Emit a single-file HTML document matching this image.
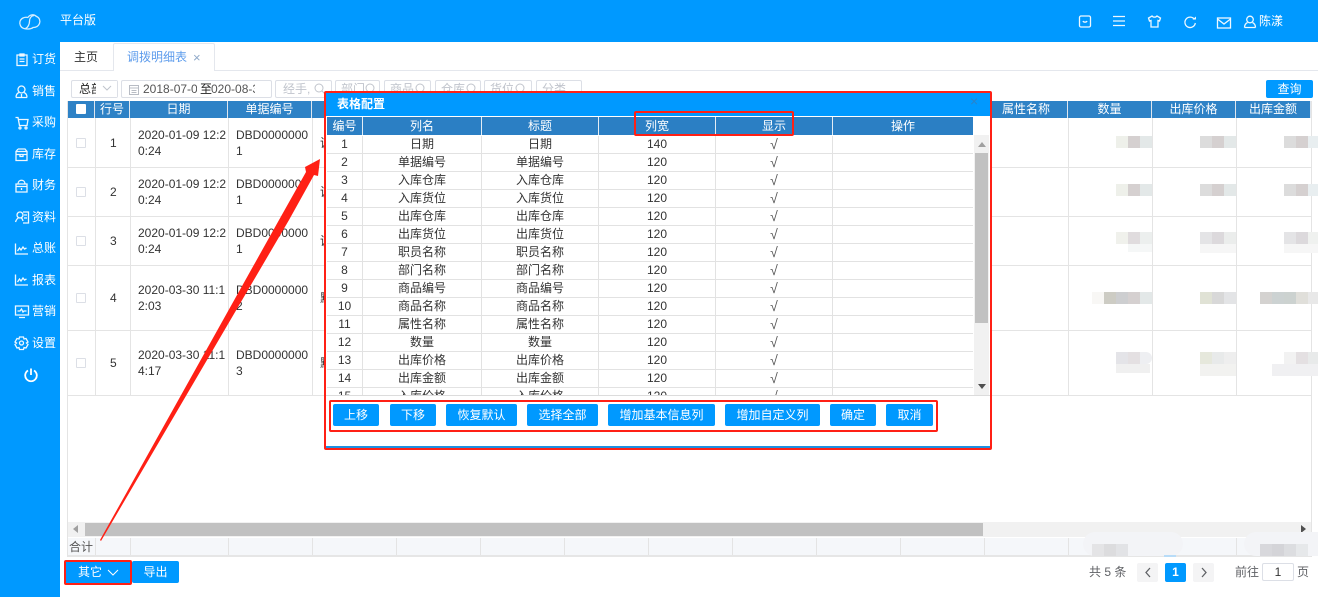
<!DOCTYPE html>
<html lang="zh"><head><meta charset="utf-8"><title>调拨明细表</title>
<style>
*{box-sizing:border-box}
html,body{margin:0;padding:0}
body{width:1318px;height:597px;overflow:hidden;position:relative;background:#fff;color:#333;font:12px/16px "Liberation Sans","Noto Sans CJK SC",sans-serif}
.a{position:absolute}
.side{left:0;top:0;width:60px;height:597px;background:#0099ff}
.top{left:0;top:0;width:1318px;height:42px;background:#0099ff}
.m{position:absolute;left:32px;color:#fff;font-size:12px;line-height:16px;white-space:nowrap}
svg{position:absolute;overflow:visible}
.wi{fill:none;stroke:#eef8ff;stroke-width:1.3}
.inp{position:absolute;height:18px;top:80px;border:1px solid #dcdfe6;background:#fff;border-radius:2px;color:#606266;overflow:hidden;white-space:nowrap}
.th{position:absolute;top:101px;height:17px;background:#2e82c6;color:#fff;text-align:center;line-height:16px;border-right:1px solid #dfe6ee;overflow:hidden}
.v{position:absolute;width:1px;background:#e4e4e4}
.h{position:absolute;left:68px;width:1243px;height:1px;background:#e4e4e4}
.c{position:absolute;color:#333;white-space:nowrap}
.b{position:absolute;width:12px;height:12px}
.f{position:absolute;top:538px;height:17px;width:1px;background:#e4e4e4}
.btn{position:absolute;top:404px;height:22px;background:#0099ff;color:#fff;text-align:center;line-height:22px;border-radius:2px}
table{border-collapse:separate;border-spacing:0;table-layout:fixed;width:647px;font-size:12px}
#mt td{height:18px;padding:0;border-bottom:1px solid #e2e2e2;border-right:1px solid #e2e2e2;text-align:center;line-height:17px;color:#333;white-space:nowrap;overflow:hidden}
#mt td:nth-child(5){font-size:14px;color:#555}
#mh td{height:18px;padding:0;background:#2b7fc4;color:#fff;text-align:center;border-right:1px solid #e3edf5;line-height:17px}
.red{position:absolute;border:2.5px solid #ff2015;border-radius:2px;background:transparent}
.pg{position:absolute;top:563px;width:21px;height:19px;background:#f4f4f5;color:#606266;text-align:center;line-height:19px;border-radius:2px}
</style></head><body>

<div class="a top"></div>
<div class="a side"></div>

<svg style="left:19px;top:13px" width="22" height="18" viewBox="0 0 22 18"><path fill="none" stroke="#d5eeff" stroke-width="1.300" d="M9 4.500C10.500 1.500 15 .8 17.500 3.500 20.500 4.500 21.500 8 20.500 10.500 19.500 13 17 14.500 14 14.500 12.500 16 8 16.500 5 15.500 1.500 14.500 .3 11 1 8.500 1.800 5.500 5.500 3.500 9 4.500M15 2.500C11 3 10.500 7 10.500 8.500 10.500 11 9 14.500 6.500 15.500"/></svg>
<div class="a" style="left:60px;top:12px;color:#fff;font-size:12px">平台版</div>

<!-- sidebar -->
<svg style="left:16px;top:53px" width="12" height="13" viewBox="0 0 12 13"><path class="wi" d="M1 2h10v10.500H1zM4 1h4v2H4zM3.500 6h5M3.500 8.500h5"/></svg>
<div class="m" style="top:51px">订货</div>
<svg style="left:15px;top:85px" width="13" height="13" viewBox="0 0 13 13"><circle class="wi" cx="6.500" cy="4.500" r="3.500"/><path class="wi" d="M1 12.500c0-4 2-4.500 3-5M12 12.500c0-4-2-4.500-3-5M1 12.500h11M6.500 9v3"/></svg>
<div class="m" style="top:83px">销售</div>
<svg style="left:15px;top:116px" width="14" height="14" viewBox="0 0 14 14"><path class="wi" d="M.5 1.500h2.500l1.500 8h7.500l1-6H3.500"/><circle class="wi" cx="5" cy="12" r="1"/><circle class="wi" cx="11" cy="12" r="1"/></svg>
<div class="m" style="top:114px">采购</div>
<svg style="left:15px;top:148px" width="13" height="13" viewBox="0 0 13 13"><path class="wi" d="M1 3.500h11v9H1zM3 1h7l2 2.500M1 3.500 3 1M1 6.500h11M5 6.500v2h3v-2"/></svg>
<div class="m" style="top:146px">库存</div>
<svg style="left:15px;top:179px" width="13" height="14" viewBox="0 0 13 14"><path class="wi" d="M1 5h11v8H1zM3 5c0-5 7-5 7 0M1 7.500h11M6.500 9v2"/></svg>
<div class="m" style="top:177px">财务</div>
<svg style="left:15px;top:211px" width="14" height="13" viewBox="0 0 14 13"><path class="wi" d="M8 1h5.500v11H8M9 4h3M9 7h3"/><circle class="wi" cx="5" cy="4" r="3"/><path class="wi" d="M.5 11c1-3 2.500-4 3-4M8 10c-.5-2-1.500-3-2-3"/></svg>
<div class="m" style="top:209px">资料</div>
<svg style="left:15px;top:243px" width="13" height="12" viewBox="0 0 13 12"><path class="wi" d="M.5 .5v10.500H13M2.500 8l2-3 1.500 2 2-3 1.500 2 2-1"/></svg>
<div class="m" style="top:240px">总账</div>
<svg style="left:15px;top:274px" width="13" height="12" viewBox="0 0 13 12"><path class="wi" d="M.5 .5v10.500H13M2.500 8l2-3 1.500 2 2-3 1.500 2 2-1"/></svg>
<div class="m" style="top:272px">报表</div>
<svg style="left:15px;top:305px" width="14" height="13" viewBox="0 0 14 13"><path class="wi" d="M.5 1h13v9H.5zM4 12.500h6M2.500 6H5l1.500-2 1.500 3 1-1h2.500"/></svg>
<div class="m" style="top:303px">营销</div>
<svg style="left:15px;top:336px" width="13" height="14" viewBox="0 0 13 14"><path class="wi" d="M4.500 1h4l.5 2 2-.5 2 3.500-1.500 1 1.500 1.500-2 3.500-2-.5-.5 2h-4l-.5-2-2 .5-2-3.500L1.500 7 0 6l2-3.500 2 .5z"/><circle class="wi" cx="6.500" cy="7" r="2"/></svg>
<div class="m" style="top:335px">设置</div>
<svg style="left:24px;top:368px" width="14" height="14" viewBox="0 0 14 14"><path fill="none" stroke="#fff" stroke-width="1.800" d="M4 2.500a5.800 5.800 0 1 0 6 0M7 .5v6.500"/></svg>

<!-- top right icons -->
<svg style="left:1079px;top:15px" width="12" height="13" viewBox="0 0 12 13"><rect class="wi" x=".5" y="1" width="11" height="11" rx="1.500"/><path class="wi" d="M4 6c.5 1.500 3.500 1.500 4 0"/></svg>
<svg style="left:1113px;top:15px" width="12" height="12" viewBox="0 0 12 12"><path class="wi" stroke-width="1.500" d="M0 1.500h12M0 6h12M0 10.500h12"/></svg>
<svg style="left:1148px;top:15px" width="13" height="13" viewBox="0 0 13 13"><path class="wi" stroke-width="1.500" d="M4 1c1 1.500 4 1.500 5 0l3.500 2-1 3-1.500-.5v6.500H3V5.500L1.500 6l-1-3z"/></svg>
<svg style="left:1184px;top:16px" width="12" height="12" viewBox="0 0 12 12"><path class="wi" stroke-width="1.500" d="M10.500 3.500A5.200 5.200 0 1 0 11.300 7"/><path d="M8.500 3.500h3.500V.5z" fill="#eef8ff"/></svg>
<svg style="left:1217px;top:17px" width="14" height="12" viewBox="0 0 14 12"><rect class="wi" stroke-width="1.500" x=".5" y="1" width="13" height="10"/><path class="wi" stroke-width="1.500" d="M.5 2 7 7l6.500-5"/></svg>
<svg style="left:1244px;top:15px" width="12" height="13" viewBox="0 0 12 13"><circle class="wi" cx="6" cy="4.500" r="3.300"/><path class="wi" d="M.5 12.500c0-3 2-4.500 3-5M11.500 12.500c0-3-2-4.500-3-5M.5 12.500h11"/></svg>
<div class="a" style="left:1259px;top:13px;color:#fff">陈漾</div>

<!-- tabs -->
<div class="a" style="left:60px;top:70px;width:1258px;height:1px;background:#e4e7ed"></div>
<div class="a" style="left:74px;top:49px;color:#333">主页</div>
<div class="a" style="left:113px;top:43px;width:102px;height:28px;background:#fff;border:1px solid #e4e7ed;border-bottom:0;border-radius:2px 2px 0 0"></div>
<div class="a" style="left:127px;top:49px;color:#5d9cec">调拨明细表</div>
<div class="a" style="left:193px;top:50px;color:#8fa9c9;font-size:13px">×</div>

<!-- toolbar -->
<div class="inp" style="left:71px;width:47px;top:80px;padding-left:7px;color:#222">总部</div>
<div class="a" style="left:96px;top:81px;width:21px;height:16px;background:#fff"></div>
<svg style="left:102px;top:85px" width="10" height="6"><path d="M1 1l4 4 4-4" fill="none" stroke="#c0c4cc"/></svg>
<div class="inp" style="left:121px;width:151px"></div>
<svg style="left:129px;top:84px" width="10" height="11"><path d="M.5 1.500h9v9h-9zM.5 4h9M2.500 6.500h5M2.500 8.500h5" fill="none" stroke="#b8bcc4"/></svg>
<div class="a" style="left:143px;top:81px;width:54px;height:16px;overflow:hidden;color:#555;white-space:nowrap">2018-07-01</div>
<div class="a" style="left:200px;top:81px;color:#222">至</div>
<div class="a" style="left:211px;top:81px;width:44px;overflow:hidden;color:#555;white-space:nowrap">020-08-31</div>
<div class="inp" style="left:275px;width:57px;padding-left:7px;color:#c0c4cc">经手,</div>
<svg style="left:314px;top:83px" width="12" height="12"><circle cx="5" cy="5" r="4" fill="none" stroke="#c0c4cc"/><path d="M8 8l3 3" stroke="#c0c4cc"/></svg>
<div class="inp" style="left:335px;width:45px;padding-left:5px;color:#c0c4cc">部门<svg style="left:29px;top:2px" width="10" height="10"><circle cx="5" cy="5" r="4" fill="none" stroke="#c0c4cc"/></svg></div>
<div class="inp" style="left:384px;width:47px;padding-left:5px;color:#c0c4cc">商品<svg style="left:30px;top:2px" width="10" height="10"><circle cx="5" cy="5" r="4" fill="none" stroke="#c0c4cc"/></svg></div>
<div class="inp" style="left:435px;width:46px;padding-left:5px;color:#c0c4cc">仓库<svg style="left:30px;top:2px" width="10" height="10"><circle cx="5" cy="5" r="4" fill="none" stroke="#c0c4cc"/></svg></div>
<div class="inp" style="left:484px;width:48px;padding-left:5px;color:#c0c4cc">货位<svg style="left:30px;top:2px" width="10" height="10"><circle cx="5" cy="5" r="4" fill="none" stroke="#c0c4cc"/></svg></div>
<div class="inp" style="left:536px;width:46px;padding-left:5px;color:#c0c4cc">分类</div>
<div class="a" style="left:1266px;top:80px;width:47px;height:18px;background:#0099ff;color:#fff;text-align:center;line-height:18px;border-radius:2px">查询</div>

<!-- main table header -->
<div class="th" style="left:68px;width:27px"></div>
<div class="a" style="left:76px;top:104px;width:10px;height:10px;background:#fff;border-radius:1px"></div>
<div class="th" style="left:95px;width:35px">行号</div>
<div class="th" style="left:130px;width:98px">日期</div>
<div class="th" style="left:228px;width:84px">单据编号</div>
<div class="th" style="left:312px;width:100px"></div>
<div class="th" style="left:985px;width:83px">属性名称</div>
<div class="th" style="left:1068px;width:84px">数量</div>
<div class="th" style="left:1152px;width:84px">出库价格</div>
<div class="th" style="left:1236px;width:75px">出库金额</div>

<!-- main lines -->
<div class="h" style="top:167px"></div><div class="h" style="top:216px"></div><div class="h" style="top:265px"></div><div class="h" style="top:330px"></div><div class="h" style="top:395px"></div>
<div class="v" style="left:67px;top:101px;height:456px"></div>
<div class="v" style="left:95px;top:118px;height:278px"></div>
<div class="v" style="left:130px;top:118px;height:278px"></div>
<div class="v" style="left:228px;top:118px;height:278px"></div>
<div class="v" style="left:312px;top:118px;height:278px"></div>
<div class="v" style="left:1068px;top:118px;height:278px"></div>
<div class="v" style="left:1152px;top:118px;height:278px"></div>
<div class="v" style="left:1236px;top:118px;height:278px"></div>
<div class="v" style="left:1311px;top:101px;height:456px"></div>

<!-- checkboxes -->
<div class="a" style="left:76px;top:138px;width:10px;height:10px;border:1px solid #dcdfe6;border-radius:1px"></div>
<div class="a" style="left:76px;top:187px;width:10px;height:10px;border:1px solid #dcdfe6;border-radius:1px"></div>
<div class="a" style="left:76px;top:236px;width:10px;height:10px;border:1px solid #dcdfe6;border-radius:1px"></div>
<div class="a" style="left:76px;top:293px;width:10px;height:10px;border:1px solid #dcdfe6;border-radius:1px"></div>
<div class="a" style="left:76px;top:358px;width:10px;height:10px;border:1px solid #dcdfe6;border-radius:1px"></div>

<!-- row text -->
<div class="c" style="left:110px;top:135px">1</div>
<div class="c" style="left:138px;top:127px">2020-01-09 12:2<br>0:24</div>
<div class="c" style="left:236px;top:127px">DBD0000000<br>1</div>
<div class="c" style="left:320px;top:135px;width:4px;overflow:hidden">调</div>
<div class="c" style="left:110px;top:184px">2</div>
<div class="c" style="left:138px;top:176px">2020-01-09 12:2<br>0:24</div>
<div class="c" style="left:236px;top:176px">DBD0000000<br>1</div>
<div class="c" style="left:320px;top:184px;width:4px;overflow:hidden">调</div>
<div class="c" style="left:110px;top:233px">3</div>
<div class="c" style="left:138px;top:225px">2020-01-09 12:2<br>0:24</div>
<div class="c" style="left:236px;top:225px">DBD0000000<br>1</div>
<div class="c" style="left:320px;top:233px;width:4px;overflow:hidden">调</div>
<div class="c" style="left:110px;top:290px">4</div>
<div class="c" style="left:138px;top:282px">2020-03-30 11:1<br>2:03</div>
<div class="c" style="left:236px;top:282px">DBD0000000<br>2</div>
<div class="c" style="left:320px;top:290px;width:4px;overflow:hidden">默</div>
<div class="c" style="left:110px;top:355px">5</div>
<div class="c" style="left:138px;top:347px">2020-03-30 11:1<br>4:17</div>
<div class="c" style="left:236px;top:347px">DBD0000000<br>3</div>
<div class="c" style="left:320px;top:355px;width:4px;overflow:hidden">默</div>

<!-- blurred -->
<div class="b" style="left:1116px;top:136px;background:#eef0ea"></div><div class="b" style="left:1128px;top:136px;background:#d5d0d0"></div><div class="b" style="left:1140px;top:136px;background:#e3e8e8"></div>
<div class="b" style="left:1200px;top:136px;background:#dcdcdc"></div><div class="b" style="left:1212px;top:136px;background:#d5d0d0"></div><div class="b" style="left:1224px;top:136px;background:#e3e8e8"></div>
<div class="b" style="left:1284px;top:136px;background:#dcdcdc"></div><div class="b" style="left:1296px;top:136px;background:#d5d0d0"></div><div class="b" style="left:1308px;top:136px;background:#e8eef0"></div>
<div class="b" style="left:1116px;top:184px;background:#eef0ea"></div><div class="b" style="left:1128px;top:184px;background:#d5d0d0"></div><div class="b" style="left:1140px;top:184px;background:#e3e8e8"></div>
<div class="b" style="left:1200px;top:184px;background:#dcdcdc"></div><div class="b" style="left:1212px;top:184px;background:#d5d0d0"></div><div class="b" style="left:1224px;top:184px;background:#e3e8e8"></div>
<div class="b" style="left:1284px;top:184px;background:#dcdcdc"></div><div class="b" style="left:1296px;top:184px;background:#d5d0d0"></div><div class="b" style="left:1308px;top:184px;background:#e8eef0"></div>
<div class="b" style="left:1116px;top:232px;background:#f0f1ec"></div><div class="b" style="left:1128px;top:232px;background:#e0dcde"></div><div class="b" style="left:1140px;top:232px;background:#ecefee"></div>
<div class="b" style="left:1200px;top:232px;background:#e4e4e6"></div><div class="b" style="left:1212px;top:232px;background:#dcd9dc"></div><div class="b" style="left:1224px;top:232px;background:#ebedec"></div>
<div class="b" style="left:1284px;top:232px;background:#e4e4e6"></div><div class="b" style="left:1296px;top:232px;background:#dcd9dc"></div><div class="b" style="left:1308px;top:232px;background:#eff1ef"></div>
<div class="a" style="left:1128px;top:244px;width:24px;height:8px;background:#f5f7f7"></div><div class="a" style="left:1200px;top:244px;width:36px;height:9px;background:#f6f6f6"></div><div class="a" style="left:1284px;top:244px;width:34px;height:9px;background:#f6f6f6"></div>
<div class="b" style="left:1092px;top:292px;background:#f8f7f5"></div><div class="b" style="left:1104px;top:292px;background:#cdccc4"></div><div class="b" style="left:1116px;top:292px;background:#cdced0"></div><div class="b" style="left:1128px;top:292px;background:#d5d0d0"></div><div class="b" style="left:1140px;top:292px;background:#e3e8e8"></div>
<div class="b" style="left:1200px;top:292px;background:#e0e2d5"></div><div class="b" style="left:1212px;top:292px;background:#d8d8d8"></div><div class="b" style="left:1224px;top:292px;background:#e3e4e6"></div>
<div class="b" style="left:1260px;top:292px;background:#d4d2d0"></div><div class="b" style="left:1272px;top:292px;background:#ccd2d2"></div><div class="b" style="left:1284px;top:292px;background:#ccd2d0"></div><div class="b" style="left:1296px;top:292px;background:#e0dfda"></div><div class="b" style="left:1308px;top:292px;width:10px;background:#e8e8e8"></div>
<div class="b" style="left:1116px;top:352px;background:#e4e4e8"></div><div class="b" style="left:1128px;top:352px;background:#e4e0e2"></div><div class="b" style="left:1140px;top:352px;background:#eeeff2;border-radius:0 6px 6px 0"></div>
<div class="a" style="left:1116px;top:364px;width:34px;height:9px;background:#f0f0f0"></div>
<div class="b" style="left:1200px;top:352px;background:#e6e8dc"></div><div class="b" style="left:1212px;top:352px;background:#e8eaea"></div><div class="b" style="left:1224px;top:352px;background:#eeeeee"></div>
<div class="a" style="left:1200px;top:364px;width:36px;height:12px;background:#f2f2f0"></div>
<div class="b" style="left:1284px;top:352px;background:#f2f2f2"></div><div class="b" style="left:1296px;top:352px;background:#e4e0e2"></div><div class="b" style="left:1308px;top:352px;width:10px;background:#e8eaea"></div>
<div class="a" style="left:1272px;top:364px;width:46px;height:12px;background:#f0f0f2"></div>

<!-- h scroll -->
<div class="a" style="left:68px;top:522px;width:1243px;height:15px;background:#f1f1f1"></div>
<div class="a" style="left:85px;top:523px;width:898px;height:13px;background:#c1c1c1"></div>
<svg style="left:73px;top:525px" width="6" height="9"><path d="M5 0v8L0 4z" fill="#a0a0a0"/></svg>
<svg style="left:1301px;top:525px" width="6" height="9"><path d="M0 0v8l5-4z" fill="#505050"/></svg>

<!-- footer row -->
<div class="a" style="left:68px;top:538px;width:1243px;height:17px;background:#f5f7fa"></div>
<div class="a" style="left:68px;top:555px;width:1243px;height:2px;background:#e6e6e6"></div>
<div class="a" style="left:69px;top:539px;color:#555">合计</div>
<div class="f" style="left:95px"></div><div class="f" style="left:130px"></div><div class="f" style="left:228px"></div><div class="f" style="left:312px"></div><div class="f" style="left:396px"></div><div class="f" style="left:480px"></div><div class="f" style="left:564px"></div><div class="f" style="left:648px"></div><div class="f" style="left:732px"></div><div class="f" style="left:816px"></div><div class="f" style="left:900px"></div><div class="f" style="left:984px"></div><div class="f" style="left:1068px"></div><div class="f" style="left:1236px"></div>
<div class="a" style="left:1083px;top:532px;width:100px;height:24px;background:#f3f4f7;border-radius:12px"></div>
<div class="a" style="left:1244px;top:532px;width:74px;height:24px;background:#f3f4f7;border-radius:12px 0 0 12px"></div>
<div class="b" style="left:1092px;top:544px;background:#e4e4e6"></div><div class="b" style="left:1104px;top:544px;background:#dcdcde"></div><div class="b" style="left:1116px;top:544px;background:#e2e3e6"></div>
<div class="b" style="left:1260px;top:544px;background:#d8d8dc"></div><div class="b" style="left:1272px;top:544px;background:#d4d4d8"></div><div class="b" style="left:1284px;top:544px;background:#dcdde0"></div><div class="b" style="left:1296px;top:544px;background:#e6e8ea"></div>
<div class="a" style="left:1164px;top:555px;width:12px;height:2px;background:#b8dcf8"></div>

<!-- bottom -->
<div class="a" style="left:66px;top:561px;width:64px;height:23px;background:#0099ff;color:#fff;line-height:23px;padding-left:12px">其它</div>
<svg style="left:107px;top:569px" width="12" height="7"><path d="M1 1l5 5 5-5" fill="none" stroke="#fff"/></svg>
<div class="a" style="left:132px;top:561px;width:47px;height:22px;background:#0099ff;color:#fff;text-align:center;line-height:22px;border-radius:2px">导出</div>
<div class="a" style="left:1089px;top:564px;color:#606266;white-space:pre">共 5 条</div>
<div class="pg" style="left:1137px"></div><svg style="left:1145px;top:567px" width="6" height="11"><path d="M5 1 1 5.500 5 10" fill="none" stroke="#606266" stroke-width="1.300"/></svg>
<div class="pg" style="left:1165px;background:#0099ff;color:#fff;font-weight:bold">1</div>
<div class="pg" style="left:1193px"></div><svg style="left:1201px;top:567px" width="6" height="11"><path d="M1 1l4 4.500L1 10" fill="none" stroke="#606266" stroke-width="1.300"/></svg>
<div class="a" style="left:1235px;top:564px;color:#606266">前往</div>
<div class="a" style="left:1262px;top:563px;width:32px;height:18px;border:1px solid #dcdfe6;text-align:center;line-height:16px;border-radius:2px">1</div>
<div class="a" style="left:1297px;top:564px;color:#606266">页</div>

<!-- modal -->
<div class="a" style="left:326px;top:93px;width:664px;height:354px;background:#fff"></div>
<div class="a" style="left:326px;top:93px;width:664px;height:23px;background:#0099ff"></div>
<div class="a" style="left:337px;top:96px;color:#fff;font-weight:bold">表格配置</div>
<div class="a" style="left:970px;top:93px;color:#2a83c9;font-size:14px">×</div>
<div class="a" style="left:327px;top:117px;width:646px;height:18px;overflow:hidden">
<table id="mh"><colgroup><col style="width:36px"><col style="width:119px"><col style="width:117px"><col style="width:117px"><col style="width:117px"><col style="width:141px"></colgroup>
<tr><td>编号</td><td>列名</td><td>标题</td><td>列宽</td><td>显示</td><td>操作</td></tr></table></div>
<div class="a" style="left:327px;top:136px;width:646px;height:259px;overflow:hidden">
<table id="mt"><colgroup><col style="width:36px"><col style="width:119px"><col style="width:117px"><col style="width:117px"><col style="width:117px"><col style="width:141px"></colgroup>
<tr><td>1</td><td>日期</td><td>日期</td><td>140</td><td>√</td><td></td></tr>
<tr><td>2</td><td>单据编号</td><td>单据编号</td><td>120</td><td>√</td><td></td></tr>
<tr><td>3</td><td>入库仓库</td><td>入库仓库</td><td>120</td><td>√</td><td></td></tr>
<tr><td>4</td><td>入库货位</td><td>入库货位</td><td>120</td><td>√</td><td></td></tr>
<tr><td>5</td><td>出库仓库</td><td>出库仓库</td><td>120</td><td>√</td><td></td></tr>
<tr><td>6</td><td>出库货位</td><td>出库货位</td><td>120</td><td>√</td><td></td></tr>
<tr><td>7</td><td>职员名称</td><td>职员名称</td><td>120</td><td>√</td><td></td></tr>
<tr><td>8</td><td>部门名称</td><td>部门名称</td><td>120</td><td>√</td><td></td></tr>
<tr><td>9</td><td>商品编号</td><td>商品编号</td><td>120</td><td>√</td><td></td></tr>
<tr><td>10</td><td>商品名称</td><td>商品名称</td><td>120</td><td>√</td><td></td></tr>
<tr><td>11</td><td>属性名称</td><td>属性名称</td><td>120</td><td>√</td><td></td></tr>
<tr><td>12</td><td>数量</td><td>数量</td><td>120</td><td>√</td><td></td></tr>
<tr><td>13</td><td>出库价格</td><td>出库价格</td><td>120</td><td>√</td><td></td></tr>
<tr><td>14</td><td>出库金额</td><td>出库金额</td><td>120</td><td>√</td><td></td></tr>
<tr><td>15</td><td>入库价格</td><td>入库价格</td><td>120</td><td>√</td><td></td></tr>
</table></div>
<div class="a" style="left:974px;top:135px;width:15px;height:260px;background:#f1f1f1"></div>
<div class="a" style="left:975px;top:153px;width:13px;height:170px;background:#c1c1c1"></div>
<svg style="left:978px;top:142px" width="8" height="5"><path d="M0 5h8L4 0z" fill="#a0a0a0"/></svg>
<svg style="left:978px;top:384px" width="8" height="5"><path d="M0 0h8L4 5z" fill="#505050"/></svg>
<div class="a" style="left:326px;top:395px;width:664px;height:1px;background:#dcdcdc"></div>
<div class="btn" style="left:333px;width:46px">上移</div>
<div class="btn" style="left:390px;width:46px">下移</div>
<div class="btn" style="left:446px;width:71px">恢复默认</div>
<div class="btn" style="left:527px;width:71px">选择全部</div>
<div class="btn" style="left:608px;width:107px">增加基本信息列</div>
<div class="btn" style="left:725px;width:95px">增加自定义列</div>
<div class="btn" style="left:830px;width:46px">确定</div>
<div class="btn" style="left:886px;width:47px">取消</div>
<div class="a" style="left:326px;top:446px;width:664px;height:2px;background:#1e8fe0"></div>

<!-- annotations -->
<div class="red" style="left:324px;top:91px;width:668px;height:359px"></div>
<div class="red" style="left:634px;top:111px;width:160px;height:25px"></div>
<div class="red" style="left:329px;top:400px;width:609px;height:32px"></div>
<div class="red" style="left:64px;top:560px;width:68px;height:25px"></div>
<svg style="left:0;top:0" width="1318" height="597"><polygon fill="#ff2015" points="100,540 279,220 306,172 305,167 320,159 318,176 314,175 289,220 101,541"/></svg>

</body></html>
